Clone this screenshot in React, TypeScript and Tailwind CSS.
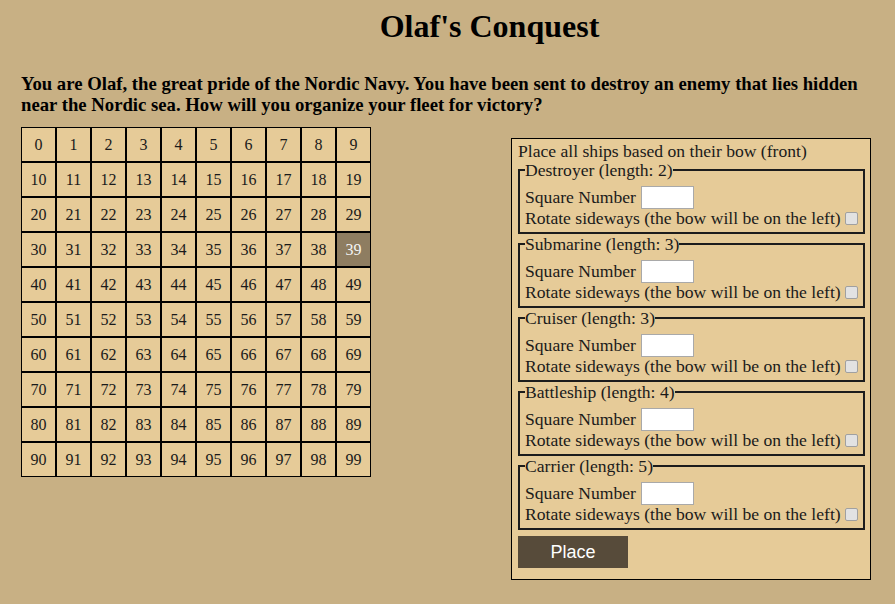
import React from "react";

const ships = [
  { name: "Destroyer", length: 2 },
  { name: "Submarine", length: 3 },
  { name: "Cruiser", length: 3 },
  { name: "Battleship", length: 4 },
  { name: "Carrier", length: 5 },
];

function ShipFieldset({ name, length }: { name: string; length: number }) {
  return (
    <fieldset className="border-2 border-solid border-[#1c1c1c] px-[5px] pt-[4px] pb-[6px]">
      <legend className="h-[20px] leading-[20px]">
        {name} (length: {length})
      </legend>
      <div className="flex h-[26px] items-center">
        <span>Square Number</span>
        <input
          type="text"
          className="ml-[5px] h-[23px] w-[53px] border border-[#a9a9a9] bg-white px-1 text-[13px]"
        />
      </div>
      <div className="flex h-[16px] items-center">
        <span>Rotate sideways (the bow will be on the left)</span>
        <input
          type="checkbox"
          className="ml-[4px] h-[13px] w-[13px] appearance-none rounded-[2px] border border-[#a0a0a0] bg-[#e2e2e2]"
        />
      </div>
    </fieldset>
  );
}

export default function App() {
  const cells = Array.from({ length: 100 }, (_, i) => i);

  return (
    <div className="min-h-[604px] bg-[#c8b084] font-['Liberation_Serif',serif] text-[16px] text-[#1a1a1a]">
      <h1 className="pt-[8px] pl-[84px] text-center text-[32px] font-bold leading-[37px] text-black">
        Olaf's Conquest
      </h1>
      <p className="mt-[29px] px-[21px] text-[18.72px] font-bold leading-[20.7px] text-black">
        You are Olaf, the great pride of the Nordic Navy. You have been sent to
        destroy an enemy that lies hidden near the Nordic sea. How will you
        organize your fleet for victory?
      </p>

      <div className="mt-[12px] flex justify-between pl-[21px] pr-[24px]">
        <div className="grid h-[350px] w-[350px] grid-cols-10">
          {cells.map((n) => (
            <div
              key={n}
              className={
                n === 39
                  ? "flex h-[35px] w-[35px] items-center justify-center border border-black bg-[#8e7d61] text-[#f4f4f4]"
                  : "flex h-[35px] w-[35px] items-center justify-center border border-black bg-[#e6cb98]"
              }
            >
              {n}
            </div>
          ))}
        </div>

        <div className="mt-[11px] w-[360px] self-start border border-black bg-[#e6cb98] pt-[3px] pr-[5px] pb-[11px] pl-[6px] text-[17.6px]">
          <div className="h-[18px] leading-[18px]">
            Place all ships based on their bow (front)
          </div>
          {ships.map((s) => (
            <ShipFieldset key={s.name} name={s.name} length={s.length} />
          ))}
          <button className="mt-[6px] flex h-[32px] w-[110px] items-center justify-center bg-[#574b3a] font-['Liberation_Sans',Arial,sans-serif] text-[18px] text-white">
            Place
          </button>
        </div>
      </div>
    </div>
  );
}
